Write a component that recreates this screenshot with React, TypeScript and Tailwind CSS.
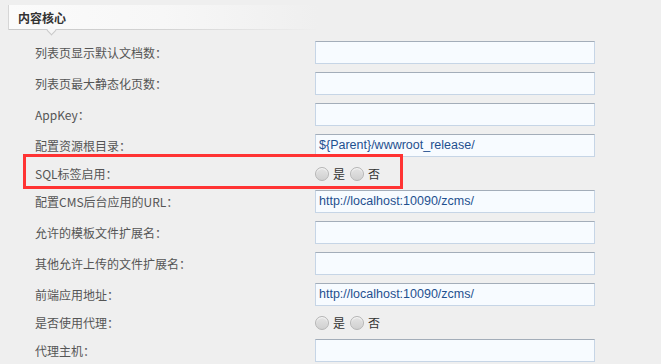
type Row =
  | { label: string; kind: "input"; value?: string }
  | { label: string; kind: "radio" };

const rows: Row[] = [
  { label: "列表页显示默认文档数：", kind: "input" },
  { label: "列表页最大静态化页数：", kind: "input" },
  { label: "AppKey：", kind: "input" },
  { label: "配置资源根目录：", kind: "input", value: "${Parent}/wwwroot_release/" },
  { label: "SQL标签启用：", kind: "radio" },
  { label: "配置CMS后台应用的URL：", kind: "input", value: "http://localhost:10090/zcms/" },
  { label: "允许的模板文件扩展名：", kind: "input" },
  { label: "其他允许上传的文件扩展名：", kind: "input" },
  { label: "前端应用地址：", kind: "input", value: "http://localhost:10090/zcms/" },
  { label: "是否使用代理：", kind: "radio" },
  { label: "代理主机：", kind: "input" },
];

function Radio({ text }: { text: string }) {
  return (
    <span className="flex items-center gap-[4px]">
      <span className="w-[14px] h-[14px] rounded-full border border-[#b5b5b5] bg-gradient-to-b from-[#e4e4e4] to-[#d0d0d0] shadow-[inset_0_1px_1px_rgba(255,255,255,0.8)]" />
      <span className="text-[12px] text-[#333]">{text}</span>
    </span>
  );
}

export default function App() {
  return (
    <div
      className="relative w-[661px] h-[364px] overflow-hidden bg-[#efefef]"
      style={{ fontFamily: '"Noto Sans CJK SC", "Liberation Sans", sans-serif' }}
    >
      {/* section tab */}
      <div className="pt-[5px] pl-[8px]">
        <div className="relative h-[25px] w-[310px] flex items-center pl-[9px] border-l border-[#d6d6d6] bg-gradient-to-r from-[#fbfbfb] via-[#f7f7f7] to-[#efefef]">
          <span className="text-[12px] font-bold text-[#333] leading-none">内容核心</span>
          <div className="absolute left-0 right-0 bottom-0 h-px bg-gradient-to-r from-[#c8c8c8] via-[#d4d4d4] to-[#efefef]" />
          <span className="absolute left-[39px] -bottom-[4px] w-[7px] h-[7px] rotate-45 bg-[#f6f6f6] border-r border-b border-[#c8c8c8]" />
        </div>
      </div>

      <div className="pt-[7px]">
        {rows.map((r) => (
          <div
            key={r.label}
            className={`flex items-center ${r.kind === "radio" ? "h-[25px]" : "h-[31px]"}`}
          >
            <div className="w-[315px] pl-[35px] text-[12px] text-[#555] leading-none">{r.label}</div>
            {r.kind === "input" ? (
              <div
                className="w-[280px] h-[23px] flex items-center px-[3px] bg-[#f7fbff] border border-[#c6d5e6] border-t-[#a3adb9] text-[12.5px] text-[#1f508f]"
                style={{ fontFamily: '"Liberation Sans", sans-serif' }}
              >
                {r.value ?? ""}
              </div>
            ) : (
              <div className="flex items-center gap-[5px]">
                <Radio text="是" />
                <Radio text="否" />
              </div>
            )}
          </div>
        ))}
      </div>

      {/* red annotation */}
      <div className="absolute left-[23px] top-[154px] w-[380px] h-[35px] border-[3px] border-[#ff3333]" />
    </div>
  );
}
